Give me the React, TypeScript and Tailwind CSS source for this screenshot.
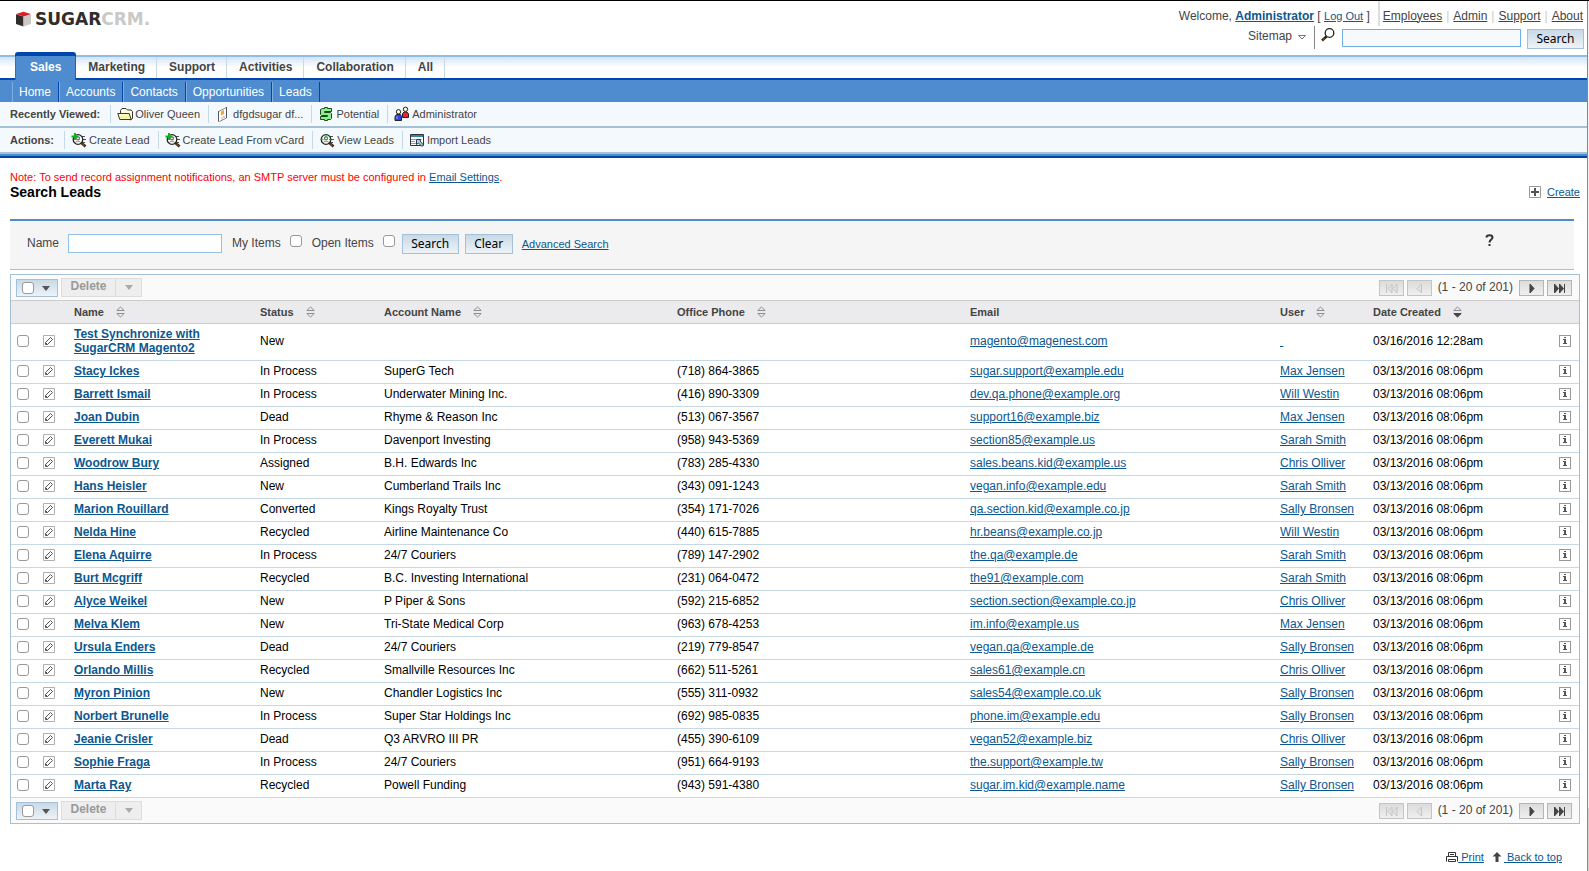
import type { ReactNode } from 'react';

type Lead = [name: string, status: string, account: string, phone: string, email: string, user: string];

const leads: Lead[] = [
  ['Test Synchronize with SugarCRM Magento2', 'New', '', '', 'magento@magenest.com', ''],
  ['Stacy Ickes', 'In Process', 'SuperG Tech', '(718) 864-3865', 'sugar.support@example.edu', 'Max Jensen'],
  ['Barrett Ismail', 'In Process', 'Underwater Mining Inc.', '(416) 890-3309', 'dev.qa.phone@example.org', 'Will Westin'],
  ['Joan Dubin', 'Dead', 'Rhyme & Reason Inc', '(513) 067-3567', 'support16@example.biz', 'Max Jensen'],
  ['Everett Mukai', 'In Process', 'Davenport Investing', '(958) 943-5369', 'section85@example.us', 'Sarah Smith'],
  ['Woodrow Bury', 'Assigned', 'B.H. Edwards Inc', '(783) 285-4330', 'sales.beans.kid@example.us', 'Chris Olliver'],
  ['Hans Heisler', 'New', 'Cumberland Trails Inc', '(343) 091-1243', 'vegan.info@example.edu', 'Sarah Smith'],
  ['Marion Rouillard', 'Converted', 'Kings Royalty Trust', '(354) 171-7026', 'qa.section.kid@example.co.jp', 'Sally Bronsen'],
  ['Nelda Hine', 'Recycled', 'Airline Maintenance Co', '(440) 615-7885', 'hr.beans@example.co.jp', 'Will Westin'],
  ['Elena Aquirre', 'In Process', '24/7 Couriers', '(789) 147-2902', 'the.qa@example.de', 'Sarah Smith'],
  ['Burt Mcgriff', 'Recycled', 'B.C. Investing International', '(231) 064-0472', 'the91@example.com', 'Sarah Smith'],
  ['Alyce Weikel', 'New', 'P Piper & Sons', '(592) 215-6852', 'section.section@example.co.jp', 'Chris Olliver'],
  ['Melva Klem', 'New', 'Tri-State Medical Corp', '(963) 678-4253', 'im.info@example.us', 'Max Jensen'],
  ['Ursula Enders', 'Dead', '24/7 Couriers', '(219) 779-8547', 'vegan.qa@example.de', 'Sally Bronsen'],
  ['Orlando Millis', 'Recycled', 'Smallville Resources Inc', '(662) 511-5261', 'sales61@example.cn', 'Chris Olliver'],
  ['Myron Pinion', 'New', 'Chandler Logistics Inc', '(555) 311-0932', 'sales54@example.co.uk', 'Sally Bronsen'],
  ['Norbert Brunelle', 'In Process', 'Super Star Holdings Inc', '(692) 985-0835', 'phone.im@example.edu', 'Sally Bronsen'],
  ['Jeanie Crisler', 'Dead', 'Q3 ARVRO III PR', '(455) 390-6109', 'vegan52@example.biz', 'Chris Olliver'],
  ['Sophie Fraga', 'In Process', '24/7 Couriers', '(951) 664-9193', 'the.support@example.tw', 'Sally Bronsen'],
  ['Marta Ray', 'Recycled', 'Powell Funding', '(943) 591-4380', 'sugar.im.kid@example.name', 'Sally Bronsen'],
];

const link = 'text-[#0b578f] underline';
const box = 'block size-3 shrink-0 appearance-none rounded-[3px] border border-[#999] bg-white checked:bg-[#4e8ccf]';
const action =
  'border border-[#a5c1d9] bg-gradient-to-b from-[#c8d9e6] to-[#eef3f7] text-center font-["Noto_Sans",sans-serif] text-xs text-black';

function LogoCube() {
  return (
    <svg className="h-4 w-[15px]" viewBox="0 0 15 16">
      <path d="M0 3.200 7.500 5.500v10L0 13z" fill="#2f2e2d" />
      <path d="M15 3.200 7.500 5.500v10l7.500-2.500z" fill="#c9c9c7" />
      <path d="M0 3 7.500.8 15 3 7.500 5.600z" fill="#dc1f26" />
    </svg>
  );
}

function FolderIcon() {
  return (
    <svg className="size-4" viewBox="0 0 16 16" strokeLinejoin="round">
      <path d="M3.500 7V4.500l1.500-2h4l1.500 1.500h3.500l1.500 1.500v7l-2 1.500" fill="#fdfbe0" stroke="#333" />
      <path d="M.8 7.500h11.400l2 6H2.800z" fill="#f6f4a8" stroke="#3b3b28" />
      <path d="M2.500 9h9" stroke="#fffde0" />
    </svg>
  );
}

function AccountIcon() {
  return (
    <svg className="size-4" viewBox="0 0 16 16">
      <path d="M3.500 5.500 11.500 1.500v10.500l-7 3.500h-1z" fill="#fff" stroke="#888" />
      <path d="M3.500 5v10M11.500 1v11" stroke="#555" />
      <path d="M6 5.500 9 4v4L6 9.500z" fill="#f9a51d" />
      <path d="M9 12v-2M7 13.500v-2" stroke="#999" />
    </svg>
  );
}

function PotentialIcon() {
  return (
    <svg className="size-4" viewBox="0 0 16 16" strokeLinejoin="round">
      <path
        d="M4.500 2.500h2v-1h3v1h4v3h-7v1h6l1 1v5l-1 1h-3v1h-3v-1h-4v-3h7v-1h-6l-1-1v-5z"
        fill="#8bf08c"
        stroke="#1f4a20"
      />
    </svg>
  );
}

function UsersIcon() {
  return (
    <svg className="size-4" viewBox="0 0 16 16" stroke="#222">
      <path d="M8.500 11.500v-4l1.500-1.500h3l1.500 2v3.500z" fill="#ef2330" />
      <circle cx="11.500" cy="3.300" r="2.200" fill="#fff3d4" />
      <path d="M1 14.500v-4l1.500-2h4l1 2v4z" fill="#2f45e8" />
      <circle cx="4.500" cy="5.800" r="2.200" fill="#fff3d4" />
      <path d="M3 10.500v2.500" stroke="#a9b5ff" />
    </svg>
  );
}

function LeadIcon({ plus }: { plus?: boolean }) {
  return (
    <svg className="size-4" viewBox="0 0 16 16" fill="none">
      <path d="M11 4.500h3M12 7.500h3M12 10.500h2" stroke="#555" />
      <circle cx="7" cy="7.500" r="4.800" fill="#fff" stroke="#222" strokeWidth="1.300" />
      <path d="M5.500 5h3v2.500h-3zM4.500 10.500c.5-2 4.500-2 5 0" fill="#ddd" stroke="#777" />
      <path d="m10.500 11 4 3.500" stroke="#33240f" strokeWidth="2.600" />
      <path d="m11.500 12 2 1.800" stroke="#a66f22" />
      {plus ? (
        <path d="M4 1v7M.5 4.500h7" stroke="#0ab51c" strokeWidth="2" />
      ) : (
        <path d="M2.500 7.500h2M6 4.500h2M10 7.500h1.500" stroke="#19d52b" strokeWidth="1.500" />
      )}
    </svg>
  );
}

function ImportIcon() {
  return (
    <svg className="size-4" viewBox="0 0 16 16">
      <path d="M1.500 2.500h13v11h-13z" fill="#fff" stroke="#333" />
      <path d="M2 3h12v2H2z" fill="#2f86a8" />
      <path d="M2 7.500h5M2 9.500h4M2 11.500h5" stroke="#999" />
      <path d="M7.500 7.500h4.500L11 9l3.500 4-1.500 1.500L9.500 11 7.500 12.500z" fill="#a9d0e5" stroke="#2b3e4b" />
    </svg>
  );
}

function SortIcon({ active }: { active?: boolean }) {
  return (
    <svg className="h-3 w-[9px]" viewBox="0 0 9 12" fill="none" stroke="#8d8d8d">
      <path d="M4.500 1 .8 4.500h7.400z" />
      {active ? <path d="M.8 7.500h7.400L4.500 11z" fill="#444" stroke="#444" /> : <path d="M.8 7.500h7.400L4.500 11z" />}
    </svg>
  );
}

function EditIcon() {
  return (
    <svg className="block size-3" viewBox="0 0 12 12" fill="none">
      <path d="M.5.5h11v11H.5z" fill="#fff" stroke="#b0b0b0" />
      <path d="M2.500 9.500V7.500l5-5 2 2-5 5zM2.500 7.500l2 2" stroke="#555" />
    </svg>
  );
}

function InfoIcon() {
  return (
    <svg className="block size-3" viewBox="0 0 12 12" shapeRendering="crispEdges">
      <path d="M.5.5h11v11H.5z" fill="#fff" stroke="#999" />
      <path d="M5 2h2v1H5zM4 4h3v4h1v1H4V8h1V5H4z" fill="#555" />
    </svg>
  );
}

function Caret({ className }: { className: string }) {
  return (
    <svg className={`h-[5px] w-2 ${className}`} viewBox="0 0 8 5">
      <path d="M0 0h8L4 5z" fill="currentColor" />
    </svg>
  );
}

function ShortcutBar({ label, items }: { label: string; items: [ReactNode, string][] }) {
  return (
    <div className="flex h-[26px] items-center border-b-2 border-[#a5c1d6] bg-[#f4f9fd] pl-2.5 text-[11px] text-[#444]">
      <span className="pr-2.5 font-bold">{label}</span>
      {items.map(([icon, text]) => (
        <a key={text} href="#" className="flex h-[18px] items-center gap-0.5 border-l border-[#c6d7e5] pr-2 pl-1.5">
          {icon}
          {text}
        </a>
      ))}
    </div>
  );
}

function PageButton({ label, disabled, children }: { label: string; disabled?: boolean; children: ReactNode }) {
  return (
    <button
      type="button"
      aria-label={label}
      disabled={disabled}
      className="flex h-4 w-[25px] items-center justify-center border border-[#b5b5b5] bg-gradient-to-b from-[#dcdcdc] to-[#efefef] text-[#444] disabled:border-[#c4c4c4] disabled:text-[#c4c4c4]"
    >
      <svg className="h-[11px] w-[13px]" viewBox="0 0 13 11" fill={disabled ? '#e4e4e4' : 'currentColor'} stroke="currentColor">
        {children}
      </svg>
    </button>
  );
}

function Toolbar({ className }: { className: string }) {
  return (
    <div className={`flex items-start justify-between bg-[#fafafa] pt-[3px] pr-[7px] pl-[5px] ${className}`}>
      <div className="flex gap-[3px]">
        <div className="mt-px flex h-[18px] w-[42px] items-center gap-2 border border-[#a5c1d9] bg-gradient-to-b from-[#c8d9e6] to-[#eef3f7] pl-[5px]">
          <input type="checkbox" aria-label="Select all" className={box} />
          <Caret className="text-[#555]" />
        </div>
        <div className="flex h-[19px] border border-[#ddd] bg-[#eee] text-[#999]">
          <button type="button" disabled className="w-[53px] pb-1 text-xs leading-[14px] font-bold">
            Delete
          </button>
          <button type="button" disabled aria-label="More actions" className="flex w-[26px] items-center justify-center border-l border-[#ddd]">
            <Caret className="text-[#aaa]" />
          </button>
        </div>
      </div>
      <div className="mt-0.5 flex items-start gap-[3px] text-xs leading-[14px] text-[#444]">
        <PageButton label="Start" disabled>
          <path d="M1.500 1v9M7 1v9L3 5.500zM12 1v9L8 5.500z" />
        </PageButton>
        <PageButton label="Previous" disabled>
          <path d="M8.500 1v9L4 5.500z" />
        </PageButton>
        <span className="px-[3px]">(1 - 20 of 201)</span>
        <PageButton label="Next">
          <path d="M5 1v9l4-4.500z" />
        </PageButton>
        <PageButton label="End">
          <path d="M1.500 1v9l4-4.500zM6.500 1v9l4-4.500zM11.500 1v9" />
        </PageButton>
      </div>
    </div>
  );
}

function Header() {
  return (
    <header className="flex h-[54px] justify-between text-xs text-[#444]">
      <a href="#" aria-label="SugarCRM" className="mt-2.5 flex h-4 items-center gap-1 pl-4">
        <LogoCube />
        <span className="font-['DejaVu_Sans',sans-serif] text-[17px] leading-4 font-bold text-[#2f2e2d]">
          SUGAR<span className="text-[#c9c9c7]">CRM.</span>
        </span>
      </a>
      <div className="flex flex-col items-end pr-[3px]">
        <div className="flex h-[25px] items-center pr-px">
          <div className="pt-1 pr-2">
            Welcome,{' '}
            <a href="#" className={`${link} font-bold`}>
              Administrator
            </a>{' '}
            [{' '}
            <a href="#" className={`${link} text-[11px]`}>
              Log Out
            </a>{' '}
            ]
          </div>
          <nav className="flex h-full items-center gap-1 border-l-2 border-[#ddd] pt-1 pl-[3px]">
            {['Employees', 'Admin', 'Support', 'About'].map((item, i) => (
              <span key={item} className="flex items-center gap-1">
                {i > 0 && <span className="text-[#ccc]">|</span>}
                <a href="#" className="underline">
                  {item}
                </a>
              </span>
            ))}
          </nav>
        </div>
        <div className="flex h-[23px] items-center">
          <button type="button" className="mr-2 flex items-center gap-1.5 pb-1">
            Sitemap
            <svg className="mt-1 h-[5px] w-2" viewBox="0 0 8 5" fill="none" stroke="#777">
              <path d="M.5.5h7L4 4z" />
            </svg>
          </button>
          <div className="flex h-[23px] items-center border-l border-[#888] pl-1.5">
            <svg className="mr-[7px] mb-1.5 size-[14px]" viewBox="0 0 14 14" fill="none">
              <circle cx="8.500" cy="5" r="4.300" stroke="#222" strokeWidth="1.300" />
              <path d="m5.500 8.500-4.500 4" stroke="#222" strokeWidth="2.500" />
              <path d="m4 10-2.500 2.200" stroke="#8a6420" />
            </svg>
            <input aria-label="Search" className="h-[18px] w-[179px] border border-[#6fb1e4] bg-[#f6fafd] px-1" />
            <button type="button" className={`${action} mt-0.5 ml-1.5 h-5 w-[57px] leading-4`}>
              Search
            </button>
          </div>
        </div>
      </div>
    </header>
  );
}

function Navigation() {
  return (
    <nav className="text-xs">
      <div className="flex h-[25px] border-y-2 border-t-[#92bce8] border-b-[#0046ad] bg-gradient-to-b from-[#d3e5f7] to-white to-50% pl-[15px] font-bold text-[#444]">
        <a
          href="#"
          className="-mt-[5px] -mb-0.5 rounded-t-[3px] border-t-4 border-[#0046ad] bg-[#4e8ccf] px-[15px] pt-[3px] text-white shadow-[inset_1px_0_#3a6ea8,inset_-1px_0_#3a5c80]"
        >
          Sales
        </a>
        {['Marketing', 'Support', 'Activities', 'Collaboration', 'All'].map((tab) => (
          <a key={tab} href="#" className="border-r border-[#cbd8e4] pt-[2px] pr-[11px] pl-3">
            {tab}
          </a>
        ))}
      </div>
      <div className="flex h-[22px] items-end bg-[#4e8ccf] pl-3 text-white">
        {['Home', 'Accounts', 'Contacts', 'Opportunities', 'Leads'].map((item) => (
          <a key={item} href="#" className="h-5 border-r border-l border-r-[#0046ad] border-l-[#7fade0] pr-[7px] pl-1.5 leading-5">
            {item}
          </a>
        ))}
      </div>
      <ShortcutBar
        label="Recently Viewed:"
        items={[
          [<FolderIcon />, 'Oliver Queen'],
          [<AccountIcon />, 'dfgdsugar df...'],
          [<PotentialIcon />, 'Potential'],
          [<UsersIcon />, 'Administrator'],
        ]}
      />
      <ShortcutBar
        label="Actions:"
        items={[
          [<LeadIcon plus />, 'Create Lead'],
          [<LeadIcon plus />, 'Create Lead From vCard'],
          [<LeadIcon />, 'View Leads'],
          [<ImportIcon />, 'Import Leads'],
        ]}
      />
      <div className="h-1 border-b-2 border-[#0046ad] bg-[#4e8ccf]" />
    </nav>
  );
}

function SearchForm() {
  return (
    <form className="mr-1.5 flex h-[51px] items-start border-t-2 border-b border-t-[#4e8ccf] border-b-[#a5c1d9] bg-[#f5f5f5] pt-[13px] pl-[17px] text-xs text-[#444]">
      <label htmlFor="name" className="mr-[9px] leading-[18px]">
        Name
      </label>
      <input id="name" className="mr-2.5 h-[19px] w-[154px] border border-[#94c1e8] bg-white px-1" />
      <label className="mr-2.5 flex gap-[9px] leading-[18px]">
        My Items <input type="checkbox" className={`${box} mt-px`} />
      </label>
      <label className="mr-[7px] flex gap-[9px] leading-[18px]">
        Open Items <input type="checkbox" className={`${box} mt-px`} />
      </label>
      <button type="button" className={`${action} mr-1.5 h-5 w-[57px] leading-[18px]`}>
        Search
      </button>
      <button type="reset" className={`${action} h-5 w-12 leading-[18px]`}>
        Clear
      </button>
      <a href="#" className={`${link} ml-[9px] text-[11px] leading-5`}>
        Advanced Search
      </a>
      <button type="button" aria-label="Help" className="mr-20 ml-auto">
        <svg className="h-3 w-[9px]" viewBox="0 0 9 12" fill="none" stroke="#333" strokeWidth="2">
          <path d="M1.500 3.500C1.500 .5 7.500 .5 7.500 3.500 7.500 5.500 4.500 5.500 4.500 8.500M4.500 10v2" />
        </svg>
      </button>
    </form>
  );
}

function Heading({ label, sort }: { label: string; sort?: 'none' | 'desc' }) {
  return (
    <th className="h-[23px] border-b border-[#ccc] p-0 pl-[5px] text-left text-[11px]">
      <span className="flex items-center gap-3">
        {label}
        {sort && <SortIcon active={sort === 'desc'} />}
      </span>
    </th>
  );
}

function LeadTable() {
  return (
    <table className="w-full table-fixed border-separate border-spacing-0 text-xs leading-[14px]">
      <colgroup>
        <col className="w-[27px]" />
        <col className="w-[31px]" />
        <col className="w-[186px]" />
        <col className="w-[124px]" />
        <col className="w-[293px]" />
        <col className="w-[293px]" />
        <col />
        <col className="w-[93px]" />
        <col className="w-[186px]" />
        <col className="w-[25px]" />
      </colgroup>
      <thead className="bg-[#ebebed] text-[#444]">
        <tr>
          <Heading label="" />
          <Heading label="" />
          <Heading label="Name" sort="none" />
          <Heading label="Status" sort="none" />
          <Heading label="Account Name" sort="none" />
          <Heading label="Office Phone" sort="none" />
          <Heading label="Email" />
          <Heading label="User" sort="none" />
          <Heading label="Date Created" sort="desc" />
          <Heading label="" />
        </tr>
      </thead>
      <tbody>
        {leads.map(([name, status, account, phone, email, user], i) => (
          <tr
            key={name}
            className="text-black [&>td]:h-[23px] [&>td]:border-b [&>td]:border-[#c6d7e5] [&>td]:pb-0.5 [&>td]:pl-[5px] first:[&>td]:h-[37px]"
          >
            <td>
              <input type="checkbox" aria-label={`Select ${name}`} className={`${box} ml-px`} />
            </td>
            <td>
              <a href="#" aria-label="Edit">
                <EditIcon />
              </a>
            </td>
            <td>
              <a href="#" className={`${link} font-bold`}>
                {name}
              </a>
            </td>
            <td>{status}</td>
            <td>{account}</td>
            <td>{phone}</td>
            <td>
              <a href="#" className={link}>
                {email}
              </a>
            </td>
            <td>
              <a href="#" className={link}>
                {user || '\u00a0'}
              </a>
            </td>
            <td>{i === 0 ? '03/16/2016 12:28am' : '03/13/2016 08:06pm'}</td>
            <td>
              <button type="button" aria-label="Additional details" className="block">
                <InfoIcon />
              </button>
            </td>
          </tr>
        ))}
      </tbody>
    </table>
  );
}

export default function App() {
  return (
    <div className="flex min-h-screen border-t border-black bg-white font-['Liberation_Sans',Arial,sans-serif]">
      <div className="min-w-0 flex-1">
        <Header />
        <Navigation />
        <main className="pr-[7px] pl-2.5">
          <p className="pt-3 text-[11px] leading-[14px] text-[#f00]">
            Note: To send record assignment notifications, an SMTP server must be configured in{' '}
            <a href="#" className={link}>
              Email Settings
            </a>
            .
          </p>
          <div className="flex h-[35px] items-start justify-between">
            <h1 className="text-sm leading-4 font-bold text-black">Search Leads</h1>
            <a href="#" className={`${link} flex items-center gap-1.5 text-[11px] leading-4`}>
              <svg className="size-3" viewBox="0 0 12 12">
                <path d="M.5.5h11v11H.5z" fill="#fff" stroke="#999" />
                <path d="M6 2v8M2 6h8" stroke="#555" strokeWidth="2" />
              </svg>
              Create
            </a>
          </div>
          <SearchForm />
          <section className="mt-1 border border-[#a5c1d9]">
            <Toolbar className="h-[26px] border-b border-[#ccc]" />
            <LeadTable />
            <Toolbar className="h-[25px]" />
          </section>
        </main>
        <footer className="flex justify-end gap-2 pt-[25px] pr-[25px] text-[11px] leading-4">
          <a href="#" className={`${link} flex items-center`}>
            <svg className="size-3" viewBox="0 0 12 12" fill="none" stroke="#333">
              <path d="M2.500 5V1.500h7V5M.5 10.500V5.500h11v5M2.500 8.500h7v2h-7zM4 3.500h4" />
            </svg>
            <span className="whitespace-pre"> Print</span>
          </a>
          <a href="#" className={`${link} flex items-center`}>
            <svg className="mr-0.5 size-[10px]" viewBox="0 0 10 10">
              <path d="M5 0 .5 4.500h3V10h3V4.500h3z" fill="#444" />
            </svg>
            <span className="whitespace-pre"> Back to top</span>
          </a>
        </footer>
      </div>
      {/* window edge */}
      <div className="flex w-0.5 flex-col border-l border-[#888]">
        <div className="flex-1 bg-[#f4f4f4]" />
        <div className="h-[63px] bg-[#d6d5cd]" />
      </div>
    </div>
  );
}
